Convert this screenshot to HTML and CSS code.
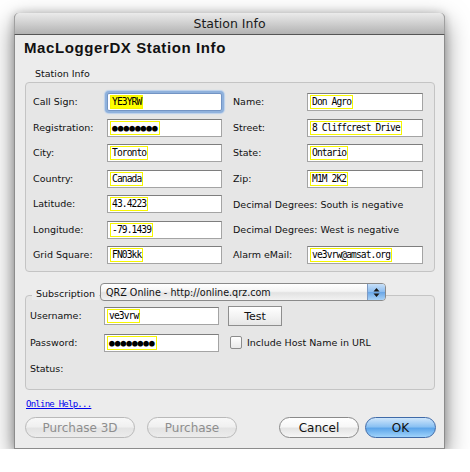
FILE: index.html
```html
<!DOCTYPE html>
<html>
<head>
<meta charset="utf-8">
<link rel="stylesheet" href="styles.css">
</head>
<body>
<div class="window">
  <div class="titlebar">Station Info</div>
  <div class="content">
    <h1 class="heading">MacLoggerDX Station Info</h1>
    <div class="group-title">Station Info</div>
    <div class="box station">
      <div class="grid">
        <span class="lbl">Call Sign:</span>
        <div class="field focus"><span class="hl on">YE3YRW</span></div>
        <span class="lbl">Name:</span>
        <div class="field wide"><span class="hl">Don Agro</span></div>

        <span class="lbl">Registration:</span>
        <div class="field"><span class="hl dots">●●●●●●●●</span></div>
        <span class="lbl">Street:</span>
        <div class="field wide"><span class="hl">8 Cliffcrest Drive</span></div>

        <span class="lbl">City:</span>
        <div class="field"><span class="hl">Toronto</span></div>
        <span class="lbl">State:</span>
        <div class="field wide"><span class="hl">Ontario</span></div>

        <span class="lbl">Country:</span>
        <div class="field"><span class="hl">Canada</span></div>
        <span class="lbl">Zip:</span>
        <div class="field wide"><span class="hl">M1M 2K2</span></div>

        <span class="lbl">Latitude:</span>
        <div class="field"><span class="hl">43.4223</span></div>
        <span class="note">Decimal Degrees: South is negative</span>

        <span class="lbl">Longitude:</span>
        <div class="field"><span class="hl">-79.1439</span></div>
        <span class="note">Decimal Degrees: West is negative</span>

        <span class="lbl">Grid Square:</span>
        <div class="field"><span class="hl">FN03kk</span></div>
        <span class="lbl">Alarm eMail:</span>
        <div class="field wide"><span class="hl">ve3vrw@amsat.org</span></div>
      </div>
    </div>

    <div class="sub">
      <div class="sub-head">
        <span class="sub-label">Subscription</span>
        <div class="popup">
          <span class="popup-text">QRZ Online - http://online.qrz.com</span>
          <span class="popup-arrows">
            <svg width="7" height="11" viewBox="0 0 7 11"><path d="M3.5 1 L6.5 4.5 L0.5 4.5 Z M3.5 10 L6.5 6.5 L0.5 6.5 Z" fill="#1a1a1a"/></svg>
          </span>
        </div>
      </div>
      <div class="box subbox">
        <div class="subgrid">
          <span class="lbl">Username:</span>
          <div class="field"><span class="hl">ve3vrw</span></div>
          <div class="test-btn">Test</div>

          <span class="lbl">Password:</span>
          <div class="field"><span class="hl dots">●●●●●●●●</span></div>
          <div class="check"><span class="checkbox"></span><span class="check-lbl">Include Host Name in URL</span></div>

          <span class="lbl">Status:</span>
        </div>
      </div>
    </div>

    <a class="help" href="#">Online Help...</a>

    <div class="buttons">
      <div class="btn disabled p3d">Purchase 3D</div>
      <div class="btn disabled pur">Purchase</div>
      <div class="spacer"></div>
      <div class="btn cancel">Cancel</div>
      <div class="btn ok">OK</div>
    </div>
  </div>
</div>
</body>
</html>
```
FILE: styles.css
```css
html, body {
  margin: 0;
  padding: 0;
  background: #ffffff;
}
body {
  padding: 13px 0 0 14px;
  font-family: "DejaVu Sans", "Liberation Sans", sans-serif;
  font-size: 9.5px;
  color: #111;
}
.window {
  width: 431px;
  height: 436px;
  box-sizing: border-box;
  background: #ececec;
  border: 1px solid #8c8c8c;
  border-top: none;
  border-radius: 5px 5px 0 0;
  box-shadow: 0 9px 24px rgba(0,0,0,0.5), 0 0 8px rgba(0,0,0,0.2);
  display: flex;
  flex-direction: column;
}
.titlebar {
  height: 21px;
  line-height: 21px;
  text-align: center;
  font-size: 12.5px;
  color: #1a1a1a;
  background: linear-gradient(#ebebeb, #d2d2d2 45%, #b2b2b2 100%);
  border-bottom: 1px solid #555;
  border-radius: 5px 5px 0 0;
  margin: 0 -1px;
  border-left: 1px solid #a0a0a0;
  border-right: 1px solid #a0a0a0;
}
.content {
  padding: 0 9px 0 10px;
  display: flex;
  flex-direction: column;
}
.heading {
  margin: 4px 0 0 -1px;
  height: 18px;
  line-height: 18px;
  font-family: "Liberation Sans", Arial, sans-serif;
  font-weight: bold;
  font-size: 15px;
  letter-spacing: 0.6px;
  color: #111;
}
.group-title {
  margin: 11px 0 2px 10px;
  line-height: 12px;
  height: 12px;
}
.box {
  border: 1px solid #c4c4c4;
  border-radius: 4px;
  background: #e6e6e6;
  box-sizing: border-box;
}
.station {
  height: 190px;
  padding: 10px 0 0 7px;
}
.grid {
  display: grid;
  grid-template-columns: 74px 126px 74px 116px;
  grid-auto-rows: 18px;
  row-gap: 7.5px;
  align-items: center;
}
.lbl {
  line-height: 12px;
  white-space: nowrap;
}
.note {
  grid-column: 3 / span 2;
  white-space: nowrap;
}
.field {
  width: 115px;
  height: 18px;
  box-sizing: border-box;
  border: 1px solid #a4a4a4;
  border-top-color: #7e7e7e;
  background: #fff;
  display: flex;
  align-items: center;
  padding-left: 2px;
}
.field.wide {
  width: 116px;
}
.field.focus {
  border: 1px solid #7394c4;
  border-radius: 2px;
  box-shadow: 0 0 0 2px #8fb1dc, 0 0 1px 3px #b8cfeb;
}
.hl {
  font-family: "DejaVu Sans Mono", "Liberation Mono", monospace;
  font-size: 9.6px;
  letter-spacing: -0.9px;
  line-height: 12px;
  border: 1px solid #f6f600;
  padding: 0 1px 0 1px;
  color: #000;
  white-space: pre;
}
.hl.on {
  background: #ffff00;
}
.hl.dots {
  font-size: 9.5px;
  letter-spacing: 0;
}
.sub {
  margin-top: 11px;
  display: flex;
  flex-direction: column;
}
.sub-head {
  display: flex;
  align-items: center;
  height: 18px;
  padding-left: 7px;
  margin-bottom: -6px;
  position: relative;
  z-index: 1;
}
.sub-label {
  background: #ececec;
  padding: 0 4px;
  line-height: 12px;
  margin-top: 3px;
}
.popup {
  margin-left: 1px;
  width: 286px;
  height: 18px;
  box-sizing: border-box;
  border: 1px solid #8a8a8a;
  border-radius: 4px;
  background: linear-gradient(#ffffff, #f4f4f4 45%, #e2e2e2 55%, #f2f2f2);
  display: flex;
  align-items: center;
  overflow: hidden;
}
.popup-text {
  flex: 1;
  padding-left: 5px;
  font-size: 9.6px;
  white-space: nowrap;
}
.popup-arrows {
  width: 17px;
  height: 100%;
  border-left: 1px solid #7d9ac3;
  background: linear-gradient(#c8e0f8, #8dbdf0 48%, #6aa6e6 52%, #a9d2f7);
  display: flex;
  align-items: center;
  justify-content: center;
}
.subbox {
  height: 95px;
  padding: 11px 0 0 4px;
}
.subgrid {
  display: grid;
  grid-template-columns: 74px 124px auto;
  grid-auto-rows: 18px;
  row-gap: 8.5px;
  align-items: center;
  justify-items: start;
}
.test-btn {
  width: 54px;
  height: 20px;
  box-sizing: border-box;
  border: 1px solid #8e8e8e;
  background: linear-gradient(#ffffff, #f3f3f3 50%, #e6e6e6);
  font-size: 11px;
  display: flex;
  align-items: center;
  justify-content: center;
  color: #111;
}
.check {
  display: flex;
  align-items: center;
  white-space: nowrap;
  margin-left: 2px;
}
.checkbox {
  flex: 0 0 12px;
  width: 12px;
  height: 13px;
  box-sizing: border-box;
  border: 1px solid #8c8c8c;
  border-radius: 2px;
  background: linear-gradient(#ffffff, #e9e9e9);
  margin-right: 5px;
}
.check-lbl {
  font-size: 9.5px;
}
.help {
  margin: 8px 0 0 1px;
  line-height: 12px;
  height: 12px;
  font-family: "DejaVu Sans Mono", monospace;
  font-size: 9px;
  letter-spacing: -0.75px;
  color: #0000ee;
  text-decoration: underline;
  align-self: flex-start;
}
.buttons {
  margin-top: 7px;
  display: flex;
  height: 21px;
  margin-right: -1px;
}
.btn {
  height: 21px;
  box-sizing: border-box;
  border: 1px solid #8a8a8a;
  border-radius: 11px;
  background: linear-gradient(#ffffff, #f7f7f7 45%, #e4e4e4 55%, #f6f6f6);
  font-size: 12px;
  display: flex;
  align-items: center;
  justify-content: center;
  color: #111;
}
.btn.disabled {
  border-color: #b9b9b9;
  color: #8e8e8e;
  background: linear-gradient(#f8f8f8, #f0f0f0 45%, #e3e3e3 55%, #ececec);
}
.p3d { width: 110px; }
.pur { width: 90px; margin-left: 12px; }
.spacer { flex: 1; }
.cancel { width: 80px; }
.ok {
  width: 71px;
  margin-left: 6px;
  border-color: #3f6aa8;
  background: linear-gradient(#cfe6fb, #8cc2f3 45%, #5ea6ea 55%, #9fd3fb);
}
```
